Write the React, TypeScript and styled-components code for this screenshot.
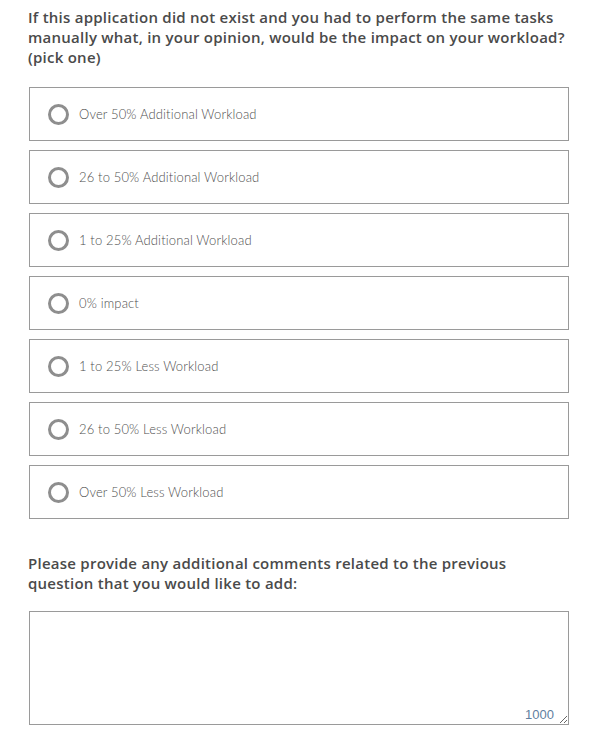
import styled, { createGlobalStyle } from "styled-components";

const options = [
  "Over 50% Additional Workload",
  "26 to 50% Additional Workload",
  "1 to 25% Additional Workload",
  "0% impact",
  "1 to 25% Less Workload",
  "26 to 50% Less Workload",
  "Over 50% Less Workload",
];

const GlobalStyle = createGlobalStyle`
  body {
    margin: 0;
    background: #fff;
    font-family: Lato, "Open Sans", sans-serif;
  }
`;

export default function App() {
  return (
    <>
      <GlobalStyle />
      <Page>
        <Question>
          If this application did not exist and you had to perform the same
          tasks manually what, in your opinion, would be the impact on your
          workload? (pick one)
        </Question>
        <Options>
          {options.map((label) => (
            <Option key={label}>
              <Radio type="radio" name="impact" />
              <OptionLabel>{label}</OptionLabel>
            </Option>
          ))}
        </Options>
        <CommentsQuestion>
          Please provide any additional comments related to the previous
          question that you would like to add:
        </CommentsQuestion>
        <TextBox>
          <TextArea />
          <Counter>1000</Counter>
        </TextBox>
      </Page>
    </>
  );
}

const Page = styled.div`
  width: 540px;
  padding: 7px 0 0 29px;
`;

const Question = styled.h3`
  width: 548px;
  margin: 0 0 20px -1px;
  font-family: "Open Sans", Lato, sans-serif;
  font-size: 15px;
  line-height: 20px;
  font-weight: 600;
  letter-spacing: 0.25px;
  color: #4a4a4a;
`;

const Options = styled.div`
  display: flex;
  flex-direction: column;
  gap: 9px;
`;

const Option = styled.label`
  display: flex;
  align-items: center;
  gap: 10px;
  box-sizing: border-box;
  height: 54px;
  padding-left: 18px;
  border: 1px solid #9a9a9a;
  background: #fff;
  cursor: pointer;
`;

const Radio = styled.input`
  appearance: none;
  margin: 0;
  width: 21px;
  height: 21px;
  box-sizing: border-box;
  border: 3px solid #8e8e8e;
  border-radius: 50%;
  background: #fff;
`;

const OptionLabel = styled.span`
  font-size: 13px;
  font-weight: 300;
  letter-spacing: 0.15px;
  color: #4f4f4f;
`;

const CommentsQuestion = styled(Question)`
  width: 520px;
  margin: 34px 0 18px -1px;
`;

const TextBox = styled.div`
  position: relative;
  height: 114px;
`;

const TextArea = styled.textarea`
  box-sizing: border-box;
  width: 100%;
  height: 100%;
  margin: 0;
  border: 1px solid #9a9a9a;
  border-radius: 0;
  resize: vertical;
  font-family: inherit;
`;

const Counter = styled.span`
  position: absolute;
  right: 15px;
  bottom: 3px;
  font-family: "Liberation Sans", Arial, sans-serif;
  font-size: 13px;
  color: #5f7f9f;
`;
